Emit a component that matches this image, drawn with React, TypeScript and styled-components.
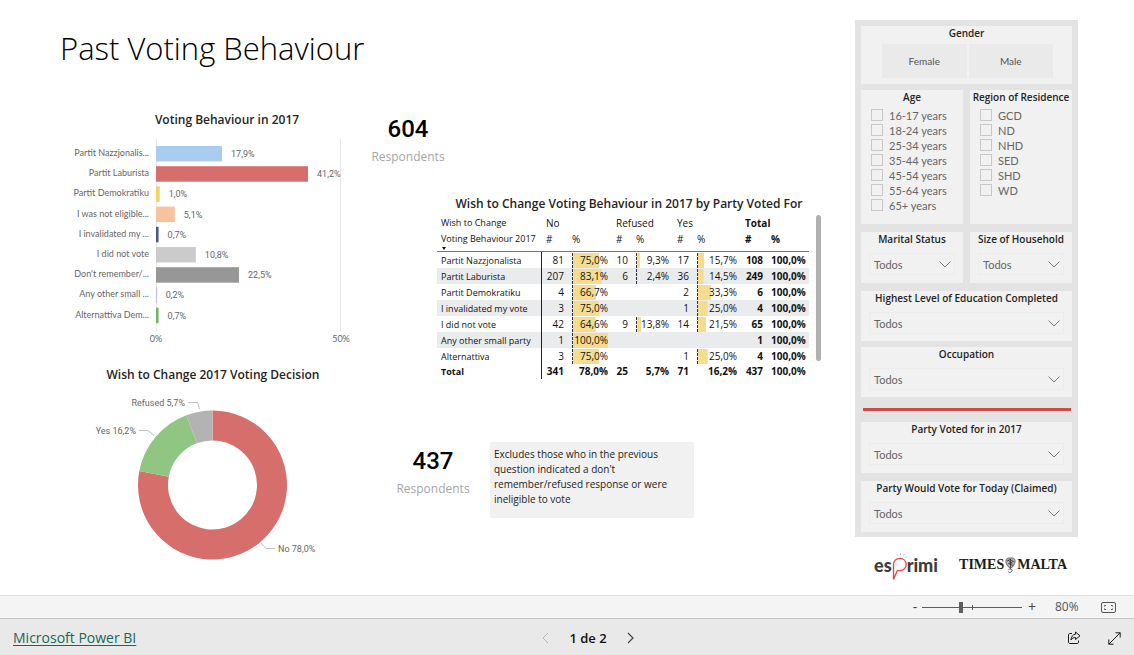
import React from "react";
import styled, { createGlobalStyle } from "styled-components";

const sans = '"Open Sans", "Noto Sans", sans-serif';
const narrow = 'Lato, "Open Sans", sans-serif';
const din = 'Roboto, "Open Sans", sans-serif';

const GlobalStyle = createGlobalStyle`
  *, *::before, *::after { box-sizing: border-box; }
  body { margin: 0; background: #fff; color: #252423; font-family: ${sans}; }
  h1, h2, p, fieldset { margin: 0; padding: 0; border: 0; }
  button, select, input { font-family: inherit; }
`;

const Page = styled.div`
  display: flex;
  flex-direction: column;
  min-height: 100vh;
`;

const Report = styled.main`
  flex: 1;
  display: flex;
  align-items: flex-start;
  padding-right: 56px;
`;

const Canvas = styled.div`
  flex: 1;
  min-width: 0;
  padding-top: 24px;
`;

const PageTitle = styled.h1`
  padding-left: 60px;
  font-size: 31px;
  font-weight: 300;
  line-height: 48px;
  color: #000;
`;

const Visuals = styled.div`
  display: grid;
  grid-template-columns: 278px minmax(0, 1fr);
  column-gap: 10px;
  padding: 38px 0 0 74px;
`;

const Column = styled.div`
  display: flex;
  flex-direction: column;
`;

const Visual = styled.section`
  display: flex;
  flex-direction: column;
`;

const VisualTitle = styled.h2<{ $indent?: number }>`
  padding-left: ${(p) => p.$indent ?? 0}px;
  font-size: 12px;
  font-weight: 600;
  line-height: 20px;
  text-align: center;
  white-space: nowrap;
`;

const DonutTitle = styled(VisualTitle)`
  padding: 17px 0 5px;
`;

const Chart = styled.svg`
  display: block;
  overflow: visible;
`;

const AxisText = styled.text`
  font-family: ${narrow};
  font-size: 9px;
  fill: #666;
`;

const DataText = styled.text`
  font-family: ${din};
  font-size: 9px;
  fill: #666;
`;

const bars = [
  { label: "Partit Nazzjonalis...", value: 17.9, text: "17,9%", color: "#a9cdef" },
  { label: "Partit Laburista", value: 41.2, text: "41,2%", color: "#d66f6b" },
  { label: "Partit Demokratiku", value: 1.0, text: "1,0%", color: "#f3d36b" },
  { label: "I was not eligible...", value: 5.1, text: "5,1%", color: "#f5c3a0" },
  { label: "I invalidated my ...", value: 0.7, text: "0,7%", color: "#4a588a" },
  { label: "I did not vote", value: 10.8, text: "10,8%", color: "#cbcbcb" },
  { label: "Don't remember/...", value: 22.5, text: "22,5%", color: "#979797" },
  { label: "Any other small ...", value: 0.2, text: "0,2%", color: "#bcaadf" },
  { label: "Alternattiva Dem...", value: 0.7, text: "0,7%", color: "#73b761" },
];

const BarChart = () => {
  const left = 82;
  const scale = 184.5 / 50;
  return (
    <Chart width="278" height="218" role="img" aria-label="Voting Behaviour in 2017">
      <path d="M82.5 8V201M266.5 8V201" stroke="#e6e6e6" />
      {bars.map((b, i) => {
        const y = 16 + i * 20.2;
        return (
          <g key={b.label}>
            <AxisText x={75} y={y + 10} textAnchor="end">{b.label}</AxisText>
            <rect x={left} y={y} width={b.value * scale} height={15.5} fill={b.color} />
            <DataText x={left + b.value * scale + 9} y={y + 11}>{b.text}</DataText>
          </g>
        );
      })}
      <AxisText x={82} y={212} textAnchor="middle">0%</AxisText>
      <AxisText x={267} y={212} textAnchor="middle">50%</AxisText>
    </Chart>
  );
};

const slices = [
  { from: 0, to: 280.8, color: "#d66f6b" },
  { from: 280.8, to: 339.4, color: "#90c582" },
  { from: 339.4, to: 360, color: "#b3b3b3" },
];

const slicePath = (from: number, to: number) => {
  const cx = 138.5;
  const cy = 95;
  const point = (r: number, deg: number) => {
    const a = (deg * Math.PI) / 180;
    return `${(cx + r * Math.sin(a)).toFixed(2)} ${(cy - r * Math.cos(a)).toFixed(2)}`;
  };
  const large = to - from > 180 ? 1 : 0;
  return `M${point(74.5, from)}A74.5 74.5 0 ${large} 1 ${point(74.5, to)}L${point(44.5, to)}A44.5 44.5 0 ${large} 0 ${point(44.5, from)}Z`;
};

const DonutChart = () => (
  <Chart width="278" height="176" role="img" aria-label="Wish to Change 2017 Voting Decision">
    {slices.map((s) => (
      <path key={s.color} d={slicePath(s.from, s.to)} fill={s.color} />
    ))}
    <path d="M114 12.5H123.5L125.5 19M65 40.5H74L80 45.5M187 153L192 158.500H201" fill="none" stroke="#c0c0c0" />
    <DataText x={111} y={16} textAnchor="end">Refused 5,7%</DataText>
    <DataText x={62} y={44} textAnchor="end">Yes 16,2%</DataText>
    <DataText x={204} y={162}>No 78,0%</DataText>
  </Chart>
);

const Card = styled.div`
  width: 92px;
  padding-top: 4px;
  text-align: center;
`;

const CardValue = styled.div`
  font-family: ${din};
  font-size: 24px;
  font-weight: 500;
  line-height: 30px;
  color: #000;
`;

const CardLabel = styled.div`
  font-size: 12px;
  line-height: 25px;
  color: #a6a6a6;
`;

const TableVisual = styled(Visual)`
  margin: 25px 0 0 75px;
  width: 384px;
`;

const TableBody = styled.div`
  display: flex;
  align-items: flex-start;
  gap: 7px;
  padding-top: 1px;
`;

const ScrollBar = styled.div`
  width: 5px;
  height: 146px;
  border-radius: 3px;
  background: #b0b0b0;
`;

const Matrix = styled.table`
  width: 372px;
  table-layout: fixed;
  border-collapse: separate;
  border-spacing: 0;
  font-size: 10px;
  color: #111;
  white-space: nowrap;
`;

const HeadCell = styled.th<{ $strong?: boolean; $last?: boolean }>`
  height: ${(p) => (p.$last ? 21 : 16)}px;
  padding: 0 4px;
  border-bottom: ${(p) => (p.$last ? "1px solid #77718c" : "0")};
  font-weight: ${(p) => (p.$strong ? 700 : 400)};
  line-height: 16px;
  text-align: left;
  vertical-align: top;

  &:first-child { font-size: 9px; }
`;

const SortArrow = styled.span`
  display: block;
  width: 0;
  margin-left: 1px;
  border: 2px solid transparent;
  border-top: 3px solid #111;
  border-bottom: 0;
`;

const Row = styled.tr<{ $shaded?: boolean; $total?: boolean }>`
  height: ${(p) => (p.$total ? 15 : 16)}px;
  background: ${(p) => (p.$shaded ? "#eaebec" : "transparent")};
  font-weight: ${(p) => (p.$total ? 700 : 400)};
`;

const RowHead = styled.th`
  padding: 0 4px;
  border-right: 1px solid #222;
  font-size: 9px;
  font-weight: inherit;
  line-height: 15px;
  text-align: left;
`;

const Cell = styled.td<{ $strong?: boolean }>`
  padding: 0 4px;
  font-weight: ${(p) => (p.$strong ? 700 : "inherit")};
  line-height: 15px;
  text-align: right;
`;

const DataBar = styled.div`
  height: 15px;
  border-left: 1px dashed #333;
  background: linear-gradient(#f4dd90, #f4dd90) no-repeat left center;
  direction: rtl;
`;

const columnWidths = [105, 26, 44, 20, 41, 20, 48, 26, 42];

const matrixRows: string[][] = [
  ["Partit Nazzjonalista", "81", "75,0%", "10", "9,3%", "17", "15,7%", "108", "100,0%"],
  ["Partit Laburista", "207", "83,1%", "6", "2,4%", "36", "14,5%", "249", "100,0%"],
  ["Partit Demokratiku", "4", "66,7%", "", "", "2", "33,3%", "6", "100,0%"],
  ["I invalidated my vote", "3", "75,0%", "", "", "1", "25,0%", "4", "100,0%"],
  ["I did not vote", "42", "64,6%", "9", "13,8%", "14", "21,5%", "65", "100,0%"],
  ["Any other small party", "1", "100,0%", "", "", "", "", "1", "100,0%"],
  ["Alternattiva", "3", "75,0%", "", "", "1", "25,0%", "4", "100,0%"],
];

const totals = ["341", "78,0%", "25", "5,7%", "71", "16,2%", "437", "100,0%"];

const share = (text: string) => parseFloat(text.replace(",", "."));

const WishTable = () => (
  <Matrix>
    <colgroup>
      {columnWidths.map((w, i) => (
        <col key={i} width={w} />
      ))}
    </colgroup>
    <thead>
      <tr>
        <HeadCell>Wish to Change</HeadCell>
        <HeadCell colSpan={2}>No</HeadCell>
        <HeadCell colSpan={2}>Refused</HeadCell>
        <HeadCell colSpan={2}>Yes</HeadCell>
        <HeadCell colSpan={2} $strong>Total</HeadCell>
      </tr>
      <tr>
        <HeadCell $last>
          Voting Behaviour 2017
          <SortArrow />
        </HeadCell>
        {["#", "%", "#", "%", "#", "%", "#", "%"].map((h, i) => (
          <HeadCell key={i} $last $strong={i > 5}>{h}</HeadCell>
        ))}
      </tr>
    </thead>
    <tbody>
      {matrixRows.map(([name, ...cells], r) => (
        <Row key={name} $shaded={r % 2 === 1}>
          <RowHead scope="row">{name}</RowHead>
          {cells.map((c, i) => (
            <Cell key={i} $strong={i > 5}>
              {i % 2 === 1 && i < 6 && c ? (
                <DataBar style={{ backgroundSize: `${share(c)}% 100%` }}>
                  <bdi>{c}</bdi>
                </DataBar>
              ) : (
                c
              )}
            </Cell>
          ))}
        </Row>
      ))}
      <Row $total>
        <RowHead scope="row">Total</RowHead>
        {totals.map((c, i) => (
          <Cell key={i}>{c}</Cell>
        ))}
      </Row>
    </tbody>
  </Matrix>
);

const NoteRow = styled.div`
  display: flex;
  align-items: flex-start;
  gap: 11px;
  padding: 63px 0 0 25px;
`;

const Note = styled.p`
  width: 204px;
  height: 76px;
  padding: 5px 4px;
  background: #f1f1f1;
  font-size: 10px;
  line-height: 15px;
  color: #222;
`;

const Side = styled.aside`
  flex: none;
  width: 223px;
  padding-top: 20px;
`;

const Filters = styled.div`
  display: flex;
  flex-direction: column;
  padding: 6px 6px 5px;
  background: #e3e3e3;
`;

const Pair = styled.div`
  display: grid;
  grid-template-columns: 1fr 1fr;
  gap: 7px;
  margin-top: 6px;

  & + & { margin-top: 8px; }
`;

const Panel = styled.fieldset<{ $height: number; $top?: number }>`
  min-width: 0;
  height: ${(p) => p.$height}px;
  margin-top: ${(p) => p.$top ?? 0}px;
  background: #f1f1f1;
`;

const PanelTitle = styled.div`
  font-size: 10px;
  font-weight: 600;
  line-height: 14px;
  text-align: center;
  white-space: nowrap;
`;

const Segments = styled.div`
  display: grid;
  grid-template-columns: 1fr 1fr;
  gap: 2px;
  margin: 4px 19px 0 21px;
`;

const Segment = styled.button`
  height: 34px;
  padding: 0;
  border: 0;
  background: #eaeaea;
  font-family: ${narrow};
  font-size: 10px;
  color: #555;
`;

const Options = styled.div`
  display: flex;
  flex-direction: column;
  padding: 4px 0 0 10px;
`;

const Option = styled.label`
  display: flex;
  align-items: center;
  gap: 6px;
  height: 15px;
  font-family: ${narrow};
  font-size: 11px;
  line-height: 15px;
  color: #666;
`;

const Tick = styled.input`
  appearance: none;
  flex: none;
  width: 12px;
  height: 12px;
  margin: 0 0 2px;
  border: 1px solid #c8c8c8;
`;

const SelectBox = styled.div`
  position: relative;
  margin: 7px 8px 0;
`;

const Select = styled.select`
  appearance: none;
  display: block;
  width: 100%;
  height: 22px;
  padding: 0 4px;
  border: 1px solid #ebebeb;
  border-radius: 0;
  background: transparent;
  font-family: ${narrow};
  font-size: 11px;
  color: #666;
`;

const SelectArrow = styled.svg`
  position: absolute;
  top: 8px;
  right: 4px;
  pointer-events: none;
`;

const Divider = styled.hr`
  width: 208px;
  height: 3px;
  margin: 11px 0 0 2px;
  border: 0;
  background: #cf4b49;
`;

const Dropdown = ({ title, height, top }: { title: string; height: number; top?: number }) => (
  <Panel $height={height} $top={top}>
    <PanelTitle>{title}</PanelTitle>
    <SelectBox>
      <Select aria-label={title} defaultValue="Todos">
        <option>Todos</option>
      </Select>
      <SelectArrow width="12" height="7" viewBox="0 0 12 7">
        <path d="M.5 .5L6 6L11.500 .5" fill="none" stroke="#777" />
      </SelectArrow>
    </SelectBox>
  </Panel>
);

const Checks = ({ title, items }: { title: string; items: string[] }) => (
  <Panel $height={134}>
    <PanelTitle>{title}</PanelTitle>
    <Options>
      {items.map((item) => (
        <Option key={item}>
          <Tick type="checkbox" />
          {item}
        </Option>
      ))}
    </Options>
  </Panel>
);

const Logos = styled.div`
  display: flex;
  align-items: flex-start;
  justify-content: space-between;
  padding: 15px 11px 0 19px;
`;

const Esprimi = styled.div`
  display: flex;
  font-family: Lato, sans-serif;
  font-size: 18px;
  font-weight: 900;
  line-height: 26px;
  color: #3c3c3c;
`;

const Times = styled.div`
  display: flex;
  align-items: center;
  gap: 1px;
  font-family: "Liberation Serif", serif;
  font-size: 14px;
  font-weight: 700;
  line-height: 26px;
  color: #1c1c1c;
`;

const StatusBar = styled.div`
  display: flex;
  align-items: center;
  justify-content: flex-end;
  height: 23px;
  padding-right: 18px;
  border-top: 1px solid #dfdfdf;
  background: #f4f4f4;
  color: #555;
`;

const ZoomButton = styled.button`
  width: 14px;
  height: 20px;
  padding: 0;
  border: 0;
  background: none;
  font-size: 14px;
  line-height: 20px;
  color: #444;
`;

const ZoomRange = styled.input`
  appearance: none;
  width: 100px;
  height: 12px;
  margin: 0 3px 0 0;
  background:
    linear-gradient(#605e5c, #605e5c) no-repeat 50px 4px / 1px 5px,
    linear-gradient(#605e5c, #605e5c) no-repeat 0 6px / 100% 1px;

  &::-webkit-slider-thumb {
    appearance: none;
    width: 4px;
    height: 11px;
    background: #605e5c;
  }
`;

const ZoomValue = styled.span`
  width: 62px;
  padding-left: 16px;
  font-size: 12px;
  line-height: 20px;
`;

const IconButton = styled.button`
  display: flex;
  align-items: center;
  justify-content: center;
  padding: 0;
  border: 0;
  background: none;
  color: #222;
`;

const BottomBar = styled.footer`
  display: grid;
  grid-template-columns: 1fr auto 1fr;
  align-items: center;
  height: 37px;
  padding: 2px 13px 0;
  border-top: 1px solid #c4c4c4;
  background: #e9e9e9;
`;

const BrandLink = styled.a`
  justify-self: start;
  font-size: 14px;
  line-height: 20px;
  color: #1a665c;
  text-underline-offset: 2px;
`;

const Pager = styled.nav`
  display: flex;
  align-items: center;
  gap: 20px;
  padding-left: 42px;
  font-size: 13px;
  font-weight: 600;
  line-height: 20px;
  color: #111;
`;

const Actions = styled.div`
  display: flex;
  justify-content: flex-end;
  gap: 27px;
`;

export default function App() {
  return (
    <Page>
      <GlobalStyle />
      <Report>
        <Canvas>
          <PageTitle>Past Voting Behaviour</PageTitle>
          <Visuals>
            <Column>
              <Visual>
                <VisualTitle $indent={28}>Voting Behaviour in 2017</VisualTitle>
                <BarChart />
              </Visual>
              <Visual>
                <DonutTitle>Wish to Change 2017 Voting Decision</DonutTitle>
                <DonutChart />
              </Visual>
            </Column>
            <Column>
              <Card>
                <CardValue>604</CardValue>
                <CardLabel>Respondents</CardLabel>
              </Card>
              <TableVisual>
                <VisualTitle>Wish to Change Voting Behaviour in 2017 by Party Voted For</VisualTitle>
                <TableBody>
                  <WishTable />
                  <ScrollBar />
                </TableBody>
              </TableVisual>
              <NoteRow>
                <Card>
                  <CardValue>437</CardValue>
                  <CardLabel>Respondents</CardLabel>
                </Card>
                <Note>
                  Excludes those who in the previous question indicated a don't remember/refused response or were
                  ineligible to vote
                </Note>
              </NoteRow>
            </Column>
          </Visuals>
        </Canvas>

        <Side>
          <Filters>
            <Panel $height={58}>
              <PanelTitle>Gender</PanelTitle>
              <Segments>
                <Segment>Female</Segment>
                <Segment>Male</Segment>
              </Segments>
            </Panel>
            <Pair>
              <Checks
                title="Age"
                items={["16-17 years", "18-24 years", "25-34 years", "35-44 years", "45-54 years", "55-64 years", "65+ years"]}
              />
              <Checks title="Region of Residence" items={["GCD", "ND", "NHD", "SED", "SHD", "WD"]} />
            </Pair>
            <Pair>
              <Dropdown title="Marital Status" height={51} />
              <Dropdown title="Size of Household" height={51} />
            </Pair>
            <Dropdown title="Highest Level of Education Completed" height={50} top={8} />
            <Dropdown title="Occupation" height={50} top={6} />
            <Divider />
            <Dropdown title="Party Voted for in 2017" height={51} top={11} />
            <Dropdown title="Party Would Vote for Today (Claimed)" height={51} top={8} />
          </Filters>
          <Logos>
            <Esprimi>
              es
              <svg width="15" height="30" viewBox="0 0 15 30">
                <path d="M1.500 27.500V12.800C1.500 8.800 4 6.500 7.800 6.500C11.500 6.500 14.200 9 14.200 12.500C14.200 16 11.500 18.600 8 18.600H5.300L1.500 27.500" fill="none" stroke="#e8494f" strokeWidth="1.400" />
                <path d="M5.500 3.500L5 2M8.500 3V1.200M11.500 3.600L12.300 2M13.500 5.500L14.500 4.500" stroke="#aaa" strokeWidth=".8" />
              </svg>
              rimi
            </Esprimi>
            <Times>
              TIMES
              <svg width="11" height="17" viewBox="0 0 11 17">
                <path d="M1 2.500L3 1H8L10 2.500V6L8 9.500L5.500 11L3 9.500L1 6Z" fill="#b5b5b5" stroke="#555" strokeWidth=".8" />
                <path d="M2 4L5 2.500L8.500 4.500L3.500 6.500L8 8.500M5.500 2V12M3 3L7.500 7" fill="none" stroke="#333" strokeWidth=".8" />
                <path d="M3.500 12.500C6 11.500 8 12.500 7 14C6 16 3.500 16 3.500 14.500" fill="none" stroke="#555" />
              </svg>
              MALTA
            </Times>
          </Logos>
        </Side>
      </Report>

      <StatusBar>
        <ZoomButton aria-label="Zoom out">-</ZoomButton>
        <ZoomRange type="range" aria-label="Zoom" min={0} max={100} defaultValue={39} />
        <ZoomButton aria-label="Zoom in">+</ZoomButton>
        <ZoomValue>80%</ZoomValue>
        <IconButton aria-label="Fit to page">
          <svg width="15" height="11" viewBox="0 0 15 11" fill="none" stroke="#555">
            <rect x=".5" y=".5" width="14" height="10" rx="1.500" />
            <path d="M3.500 4.500V3.500H5M10 3.500H11.500V4.500M11.500 6.500V7.500H10M5 7.500H3.500V6.500" />
          </svg>
        </IconButton>
      </StatusBar>

      <BottomBar>
        <BrandLink href="#">Microsoft Power BI</BrandLink>
        <Pager aria-label="Pages">
          <IconButton aria-label="Previous page" disabled>
            <svg width="7" height="12" viewBox="0 0 7 12" fill="none" stroke="#b8b8b8">
              <path d="M6 1L1 6L6 11" />
            </svg>
          </IconButton>
          <span>1 de 2</span>
          <IconButton aria-label="Next page">
            <svg width="7" height="12" viewBox="0 0 7 12" fill="none" stroke="#444" strokeWidth="1.200">
              <path d="M1 1L6 6L1 11" />
            </svg>
          </IconButton>
        </Pager>
        <Actions>
          <IconButton aria-label="Share">
            <svg width="14" height="14" viewBox="0 0 14 14" fill="none" stroke="#1a1a1a" strokeLinejoin="round">
              <path d="M5 2.500H3C1.900 2.500 1.500 3.200 1.500 4V11C1.500 12 2 12.500 3 12.500H10C11 12.500 11.500 12 11.500 11V9.500" />
              <path d="M8.500 1L13 4.800L8.500 8.500V6.500C6.500 6.500 5 7.200 4 9C4.200 5.500 6 3.500 8.500 3.200Z" />
            </svg>
          </IconButton>
          <IconButton aria-label="Full screen">
            <svg width="13" height="13" viewBox="0 0 13 13" fill="none" stroke="#1a1a1a">
              <path d="M.8 12.200L12.200 .8M7.500 .8H12.200V5.500M.8 7.500V12.200H5.500" />
            </svg>
          </IconButton>
        </Actions>
      </BottomBar>
    </Page>
  );
}
